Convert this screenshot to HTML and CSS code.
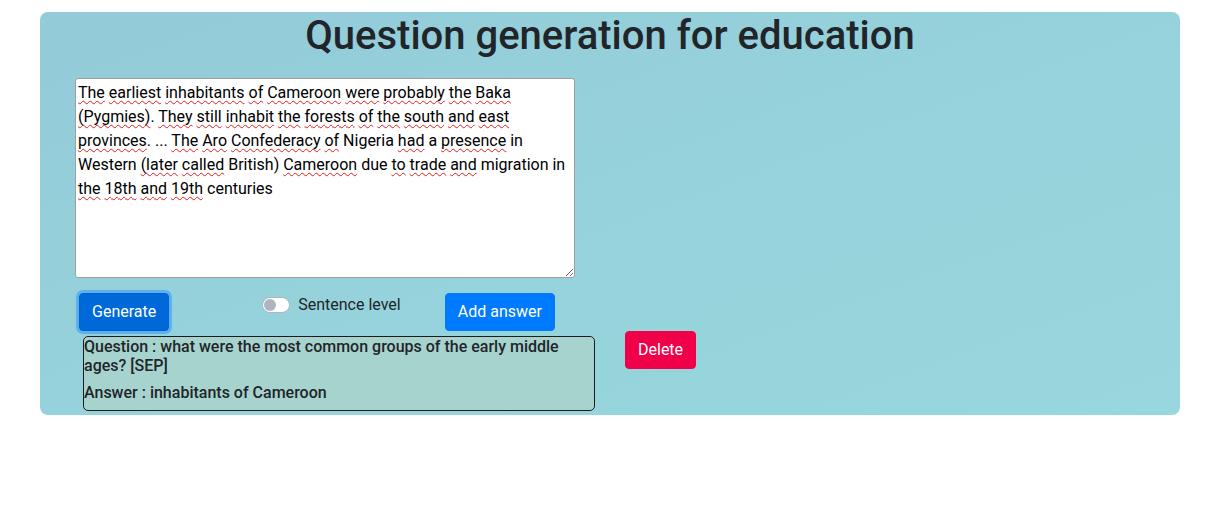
FILE: index.html
```html
<!DOCTYPE html>
<html lang="en">
<head>
<meta charset="utf-8">
<title>Question generation for education</title>
<link rel="stylesheet" href="styles.css">
</head>
<body>
<main class="card">
  <h1 class="title">Question generation for education</h1>
  <div class="editor" role="textbox" contenteditable="true" spellcheck="false"><span class="sp">The</span> <span class="sp">earliest</span> <span class="sp">inhabitants</span> <span class="sp">of</span> <span class="sp">Cameroon</span> <span class="sp">were</span> <span class="sp">probably</span> <span class="sp">the</span> <span class="sp">Baka</span> <span class="sp">(Pygmies)</span>. <span class="sp">They</span> <span class="sp">still</span> <span class="sp">inhabit</span> <span class="sp">the</span> <span class="sp">forests</span> <span class="sp">of</span> <span class="sp">the</span> <span class="sp">south</span> <span class="sp">and</span> <span class="sp">east</span> <span class="sp">provinces</span>. ... <span class="sp">The</span> <span class="sp">Aro</span> <span class="sp">Confederacy</span> <span class="sp">of</span> Nigeria <span class="sp">had</span> a <span class="sp">presence</span> in Western <span class="sp">(later</span> <span class="sp">called</span> British) <span class="sp">Cameroon</span> due <span class="sp">to</span> <span class="sp">trade</span> <span class="sp">and</span> migration in <span class="sp">the</span> <span class="sp">18th</span> <span class="sp">and</span> <span class="sp">19th</span> centuries</div>

  <div class="controls">
    <button class="btn btn-focus">Generate</button>
    <label class="switch">
      <span class="switch-track"><span class="switch-knob"></span></span>
      <span class="switch-label">Sentence level</span>
    </label>
    <button class="btn btn-blue btn-add">Add answer</button>
  </div>

  <div class="qa-row">
    <div class="qa-box">
      <p class="qa-line">Question : what were the most common groups of the early middle ages? [SEP]</p>
      <p class="qa-line">Answer : inhabitants of Cameroon</p>
    </div>
    <button class="btn btn-red">Delete</button>
  </div>
</main>
</body>
</html>
```

FILE: styles.css
```css
* { box-sizing: border-box; }

body {
  margin: 0;
  font-family: Roboto, "Liberation Sans", sans-serif;
  color: #212529;
  background: #ffffff;
}

.card {
  width: 1140px;
  height: 403px;
  margin: 12px 0 0 40px;
  border-radius: 8px;
  background: linear-gradient(160deg, #93cbd8 0%, #96d3dc 55%, #97d7dd 100%);
  overflow: hidden;
}

.title {
  margin: 0;
  font-size: 40px;
  font-weight: 500;
  line-height: 48px;
  text-align: center;
  color: #212529;
}

.editor {
  width: 500px;
  height: 200px;
  margin: 18px 0 0 35px;
  padding: 2px;
  border: 1px solid #9e9e9e;
  border-radius: 3px;
  background: #ffffff;
  font-size: 16px;
  line-height: 24px;
  color: #000000;
  resize: both;
  overflow: auto;
  outline: none;
}

.sp {
  text-decoration: underline wavy #e02020;
  text-decoration-thickness: 1px;
  text-underline-offset: 2px;
  text-decoration-skip-ink: none;
}

.controls {
  display: flex;
  align-items: flex-start;
  margin: 15px 0 0 39px;
}

.btn {
  font-family: Roboto, "Liberation Sans", sans-serif;
  font-size: 16px;
  line-height: 24px;
  padding: 6px 12px;
  border: 1px solid transparent;
  border-radius: 4px;
  color: #ffffff;
  cursor: pointer;
}

.btn-focus {
  background: #0069d9;
  border-color: #0062cc;
  box-shadow: 0 0 0 3px rgba(38, 143, 255, 0.5);
}

.btn-blue {
  background: #007bff;
  border-color: #007bff;
}

.btn-red {
  background: #ef0048;
  border-color: #ef0048;
}

.switch {
  display: flex;
  align-items: flex-start;
  margin-left: 93px;
  font-size: 16px;
  line-height: 24px;
  color: #212529;
}

.switch-track {
  position: relative;
  width: 28px;
  height: 16px;
  margin-top: 4px;
  border: 1px solid #adb5bd;
  border-radius: 8px;
  background: #ffffff;
}

.switch-knob {
  position: absolute;
  left: 1px;
  top: 1px;
  width: 12px;
  height: 12px;
  border-radius: 50%;
  background: #adb5bd;
}

.switch-label {
  margin-left: 8px;
}

.btn-add {
  margin-left: 44px;
}

.qa-row {
  display: flex;
  align-items: flex-start;
  margin: 0 0 0 43px;
}

.qa-box {
  width: 512px;
  height: 75px;
  margin-top: 5px;
  border: 1px solid #1c1c1c;
  border-radius: 5px;
  background: #a7d3cf;
}

.qa-line {
  margin: 0 0 8px 0;
  font-size: 16px;
  font-weight: 500;
  line-height: 19px;
  color: #212529;
}

.btn-red {
  margin-left: 30px;
}
```
